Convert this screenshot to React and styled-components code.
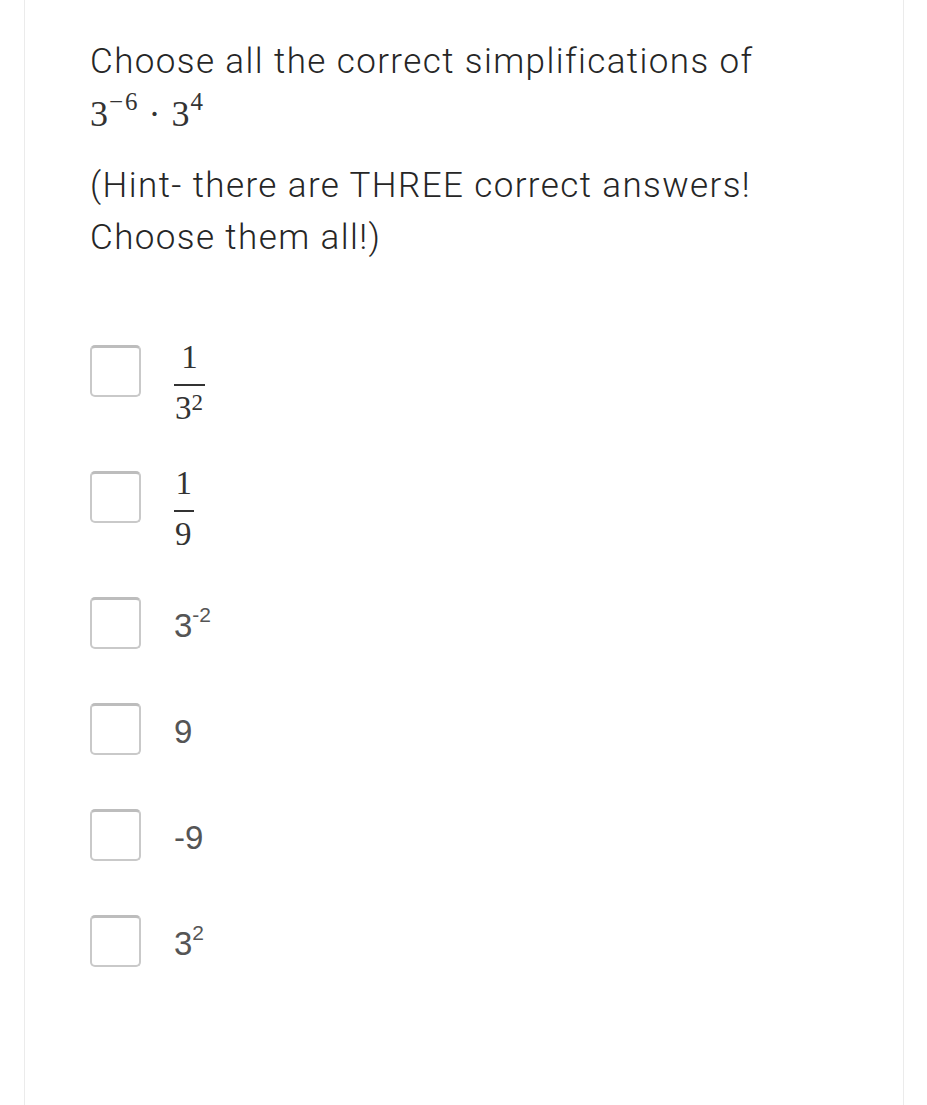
import React from "react";
import styled, { createGlobalStyle } from "styled-components";

const Global = createGlobalStyle`
  html, body { margin: 0; padding: 0; background: #ffffff; }
  body { font-family: Roboto, "Noto Sans", sans-serif; }
`;

const Page = styled.div`
  padding: 0 23px 0 24px;
  min-height: 1105px;
  box-sizing: border-box;
  display: flex;
`;

const Card = styled.div`
  flex: 1;
  background: #fff;
  border-left: 1px solid #ebebeb;
  border-right: 1px solid #ebebeb;
  padding: 36px 40px 0 65px;
  box-sizing: border-box;
`;

const Prompt = styled.div`
  font-family: Roboto, "Noto Sans", sans-serif;
  font-weight: 300;
  font-size: 35px;
  line-height: 52px;
  color: #262626;
  letter-spacing: 1.4px;
`;

const Para = styled.p`
  margin: 0 0 19px;
  &:last-child { margin-bottom: 0; }
`;

const MathLine = styled.span`
  font-family: "Liberation Serif", "DejaVu Serif", serif;
  font-weight: 400;
  font-size: 36px;
  letter-spacing: 0;
  color: #333;
  sup { font-size: 25px; vertical-align: 16px; line-height: 0; margin-left: 1px; }
`;

const Minus = styled.span`
  margin-right: 2px;
`;

const Dot = styled.span`
  margin: 0 11px;
`;

const Options = styled.div`
  margin-top: 81px;
  display: flex;
  flex-direction: column;
`;

const Row = styled.label`
  display: flex;
  align-items: flex-start;
  gap: 33px;
  height: ${(p) => (p.$tall ? 126 : 106)}px;
`;

const Box = styled.span`
  width: 51px;
  height: 52px;
  box-sizing: border-box;
  border: 2px solid #c9c9c9;
  border-top: 3px solid #bdbdbd;
  border-radius: 5px;
  background: #fff;
  flex: none;
`;

const Answer = styled.span`
  font-family: "Liberation Sans", Arial, sans-serif;
  font-size: 33px;
  line-height: 57px;
  color: #555;
  sup { font-size: 21px; vertical-align: 15px; line-height: 0; }
`;

const Frac = styled.span`
  display: inline-flex;
  flex-direction: column;
  align-items: center;
  margin-top: -4px;
  font-family: "Liberation Serif", "DejaVu Serif", serif;
  font-size: 33px;
  color: #333;
  line-height: 33px;
  sup { font-size: 23px; vertical-align: 9px; line-height: 0; }
`;

const Num = styled.span`
  padding: 0 1px 10px;
  border-bottom: 2px solid #333;
  align-self: stretch;
  text-align: center;
`;

const Den = styled.span`
  padding: 6px 2px 0 1px;
`;

const options = [
  { kind: "frac", num: "1", den: <>3<sup>2</sup></> },
  { kind: "frac", num: "1", den: "9" },
  { kind: "text", v: <>3<sup>-2</sup></> },
  { kind: "text", v: "9" },
  { kind: "text", v: "-9" },
  { kind: "text", v: <>3<sup>2</sup></> },
];

export default function App() {
  return (
    <>
      <Global />
      <Page>
        <Card>
          <Prompt>
            <Para>
              Choose all the correct simplifications of
              <br />
              <MathLine>
                3<sup><Minus>−</Minus>6</sup>
                <Dot>·</Dot>3<sup>4</sup>
              </MathLine>
            </Para>
            <Para>
              (Hint- there are THREE correct answers!
              <br />
              Choose them all!)
            </Para>
          </Prompt>
          <Options>
            {options.map((o, i) => (
              <Row key={i} $tall={i < 2}>
                <Box />
                {o.kind === "frac" ? (
                  <Frac>
                    <Num>{o.num}</Num>
                    <Den>{o.den}</Den>
                  </Frac>
                ) : (
                  <Answer>{o.v}</Answer>
                )}
              </Row>
            ))}
          </Options>
        </Card>
      </Page>
    </>
  );
}
